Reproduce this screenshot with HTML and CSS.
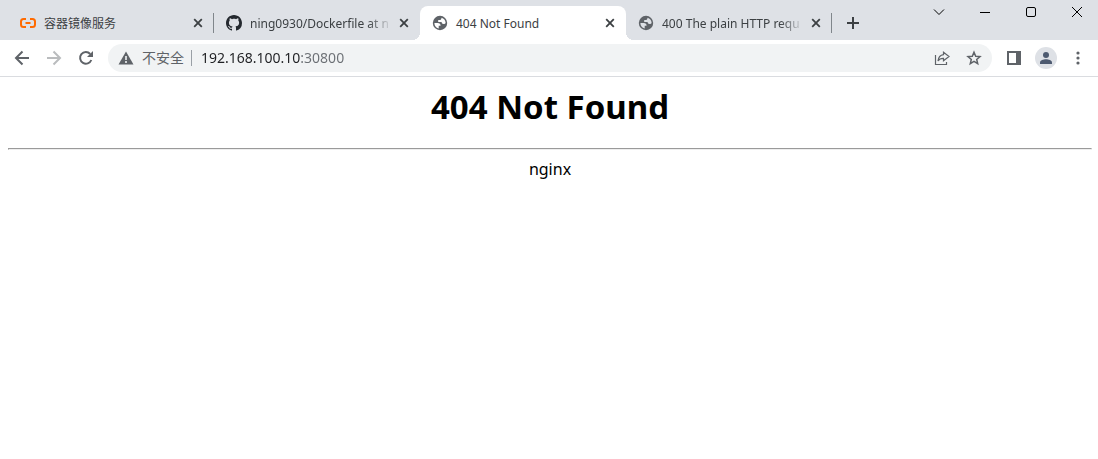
FILE: index.html
```html
<!DOCTYPE html>
<html lang="zh-CN">

<head>
  <meta charset="UTF-8" />
  <title>404 Not Found</title>
  <link rel="stylesheet" href="styles.css">
</head>

<body>
  <svg class="sprite" width="0" height="0" aria-hidden="true">
    <symbol id="close" viewBox="0 0 16 16">
      <path d="M4.2 4.2l7.6 7.6M11.8 4.2l-7.6 7.6" fill="none" stroke="currentColor" stroke-width="1.8" />
    </symbol>
    <symbol id="globe" viewBox="0 0 16 16">
      <path fill="#5f6368" fill-rule="evenodd" d="M8 .8a7.200 7.200 0 1 0 0 14.400A7.200 7.200 0 0 0 8 .8zM2.400 8h3.400c1.800 0 2.800.9 2.800 2.700H6.700v2.700A5.600 5.600 0 0 1 2.400 8zM9.500 2.700c2.300.6 4 2.700 4.100 5.100-.3 1-1.100 1.300-2 1.300-1.400 0-1.900-.7-2-2H6.200V5h1.300c1.200 0 2-.8 2-2.300z" />
    </symbol>
  </svg>

  <!-- 标签栏 -->
  <header class="tabbar">
    <div class="tab line">
      <button class="tab-title" type="button">
        <svg class="favicon" viewBox="0 0 16 16" fill="none" stroke="#ff6a00" stroke-width="2">
          <path d="M6 4H3.500Q1 4 1 6.500V9.500Q1 12 3.500 12H6M10 4H12.500Q15 4 15 6.500V9.500Q15 12 12.500 12H10M5.500 8H10.500" />
        </svg>
        <span>容器镜像服务</span>
      </button>
      <button class="tab-close" type="button" aria-label="关闭"><svg><use href="#close" /></svg></button>
    </div>
    <div class="tab">
      <button class="tab-title fade" type="button">
        <svg class="favicon" viewBox="0 0 16 16" fill="#24292f">
          <path d="M8 0C3.580 0 0 3.580 0 8c0 3.540 2.290 6.530 5.470 7.590.4.070.550-.170.550-.380 0-.190-.010-.820-.010-1.490-2.010.370-2.530-.490-2.690-.940-.090-.230-.480-.940-.820-1.130-.280-.150-.680-.520-.010-.530.630-.010 1.080.580 1.230.820.720 1.210 1.870.870 2.330.660.070-.520.280-.870.510-1.070-1.780-.2-3.640-.890-3.640-3.950 0-.870.310-1.590.820-2.150-.080-.2-.360-1.020.080-2.120 0 0 .670-.210 2.200.820.640-.180 1.320-.270 2-.270s1.360.090 2 .270c1.530-1.040 2.200-.820 2.200-.820.440 1.100.160 1.920.080 2.120.510.560.820 1.270.820 2.150 0 3.070-1.870 3.750-3.650 3.950.290.250.540.730.540 1.480 0 1.070-.010 1.930-.010 2.200 0 .210.150.460.550.380A8.010 8.010 0 0 0 16 8c0-4.420-3.580-8-8-8z" />
        </svg>
        <span>ning0930/Dockerfile at n</span>
      </button>
      <button class="tab-close" type="button" aria-label="关闭"><svg><use href="#close" /></svg></button>
    </div>
    <div class="tab active">
      <button class="tab-title" type="button">
        <svg class="favicon"><use href="#globe" /></svg>
        <span>404 Not Found</span>
      </button>
      <button class="tab-close" type="button" aria-label="关闭"><svg><use href="#close" /></svg></button>
    </div>
    <div class="tab line">
      <button class="tab-title fade" type="button">
        <svg class="favicon"><use href="#globe" /></svg>
        <span>400 The plain HTTP requ</span>
      </button>
      <button class="tab-close" type="button" aria-label="关闭"><svg><use href="#close" /></svg></button>
    </div>
    <button class="tab-new" type="button" aria-label="新标签页">
      <svg width="12" height="12" viewBox="0 0 12 12" stroke="#3c4043" stroke-width="2"><path d="M6 0v12M0 6h12" /></svg>
    </button>

    <!-- 窗口按钮 -->
    <div class="window">
      <button type="button" aria-label="搜索标签页">
        <svg width="12" height="12" viewBox="0 0 12 12"><path d="M1 3.500l5 5 5-5" /></svg>
      </button>
      <button type="button" aria-label="最小化">
        <svg width="12" height="12" viewBox="0 0 12 12"><path d="M1 6.500h10" /></svg>
      </button>
      <button type="button" aria-label="最大化">
        <svg width="12" height="12" viewBox="0 0 12 12"><rect x="1.500" y="1.500" width="9" height="9" rx="1.500" /></svg>
      </button>
      <button type="button" aria-label="关闭窗口">
        <svg width="12" height="12" viewBox="0 0 12 12"><path d="M1 1l10 10M11 1L1 11" /></svg>
      </button>
    </div>
  </header>

  <!-- 工具栏 -->
  <nav class="toolbar">
    <button class="tool" type="button" aria-label="后退">
      <svg width="16" height="16" viewBox="0 0 16 16" fill="none" stroke="currentColor" stroke-width="2"><path d="M15 8H2.500M8.500 1.500L2 8l6.500 6.500" /></svg>
    </button>
    <button class="tool" type="button" aria-label="前进" disabled>
      <svg width="16" height="16" viewBox="0 0 16 16" fill="none" stroke="currentColor" stroke-width="2"><path d="M1 8h12.500M7.500 1.500L14 8l-6.500 6.500" /></svg>
    </button>
    <button class="tool" type="button" aria-label="重新加载">
      <svg width="16" height="16" viewBox="0 0 16 16">
        <path d="M13.300 10A5.800 5.800 0 1 1 12.200 4" fill="none" stroke="currentColor" stroke-width="2" />
        <path d="M15 1v6H9z" fill="currentColor" />
      </svg>
    </button>

    <div class="address">
      <svg width="16" height="16" viewBox="0 0 16 16">
        <path d="M8 1.500L15.500 14.500H.5z" fill="#5f6368" />
        <path d="M8 6v4M8 11v2" stroke="#f1f3f4" stroke-width="1.600" />
      </svg>
      <label for="url">不安全</label>
      <input type="text" id="url" value="192.168.100.10:30800" />
      <button class="tool" type="button" aria-label="分享">
        <svg width="16" height="16" viewBox="0 0 16 16" fill="none" stroke="currentColor" stroke-width="1.200">
          <path d="M1.500 5v9.500h11V12M9.500 2.200L15 6.500l-5.500 4.300V8.400C7 8.300 5.200 9.200 4 11c.4-3.500 2.300-5.800 5.500-6.300z" />
        </svg>
      </button>
      <button class="tool" type="button" aria-label="收藏">
        <svg width="16" height="16" viewBox="0 0 16 16" fill="none" stroke="currentColor" stroke-width="1.500">
          <path d="M8 2.200l1.700 4 4.300.4-3.300 2.800 1 4.200L8 11.400l-3.700 2.200 1-4.200L2 6.600l4.300-.4z" />
        </svg>
      </button>
    </div>

    <button class="tool" type="button" aria-label="侧边栏">
      <svg width="14" height="14" viewBox="0 0 14 14"><path d="M0 0h14v14H0zM2 2v10h7V2z" fill="currentColor" fill-rule="evenodd" /></svg>
    </button>
    <button class="tool" type="button" aria-label="用户">
      <svg width="22" height="22" viewBox="0 0 22 22">
        <circle cx="11" cy="11" r="11" fill="#dee1e6" />
        <circle cx="11" cy="8" r="3" fill="#4d5a70" />
        <path d="M5 17v-1.500c0-2.200 3.500-3.300 6-3.300s6 1.100 6 3.300V17z" fill="#4d5a70" />
      </svg>
    </button>
    <button class="tool" type="button" aria-label="菜单">
      <svg width="4" height="14" viewBox="0 0 4 14" fill="currentColor"><circle cx="2" cy="2" r="1.600" /><circle cx="2" cy="7" r="1.600" /><circle cx="2" cy="12" r="1.600" /></svg>
    </button>
  </nav>

  <!-- 网页内容 -->
  <main>
    <h1>404 Not Found</h1>
    <hr>
    <p>nginx</p>
  </main>
</body>

</html>
```
FILE: styles.css
```css
body {
  margin: 0;
  background-color: #fff;
  font-family: "Noto Sans", "Noto Sans CJK SC", sans-serif;
}

.sprite {
  position: absolute;
}

button {
  display: flex;
  align-items: center;
  justify-content: center;
  flex: none;
  padding: 0;
  border: none;
  background: none;
  color: #5f6368;
  font-family: inherit;
}

svg {
  display: block;
  flex: none;
}

/* 标签栏 */
.tabbar {
  display: flex;
  height: 40px;
  padding: 0 9px 0 8px;
  box-sizing: border-box;
  background-color: #dee1e6;
}

.tab {
  position: relative;
  display: flex;
  align-items: center;
  flex: 0 1 206px;
  min-width: 0;
  height: 34px;
  margin-top: 6px;
  padding: 0 8px 0 12px;
  box-sizing: border-box;
}

.tab-title {
  flex: 1;
  justify-content: flex-start;
  gap: 8px;
  min-width: 0;
  overflow: hidden;
  color: #3c4043;
  font-size: 12px;
  line-height: 20px;
  white-space: nowrap;
}

.tab-title span {
  padding-top: 2px;
}

.fade {
  -webkit-mask-image: linear-gradient(to left, transparent 4px, #000 28px);
  mask-image: linear-gradient(to left, transparent 4px, #000 28px);
}

.favicon,
.tab-close svg {
  width: 16px;
  height: 16px;
}

.tab-close {
  color: #3c4043;
}

.line::after {
  content: "";
  position: absolute;
  top: 7px;
  right: 0;
  width: 1px;
  height: 20px;
  background-color: #80868b;
}

.active {
  border-radius: 8px 8px 0 0;
  background-color: #fff;
}

.active::before,
.active::after {
  content: "";
  position: absolute;
  bottom: 0;
  width: 8px;
  height: 8px;
}

.active::before {
  left: -8px;
  background: radial-gradient(circle at 0 0, transparent 8px, #fff 8px);
}

.active::after {
  right: -8px;
  background: radial-gradient(circle at 100% 0, transparent 8px, #fff 8px);
}

.tab-new {
  width: 28px;
  height: 28px;
  margin: 9px 0 0 7px;
}

.window {
  display: flex;
  gap: 22px;
  margin-left: auto;
}

.window button {
  width: 24px;
  height: 24px;
}

.window svg {
  fill: none;
  stroke: #000;
}

/* 工具栏 */
.toolbar {
  display: flex;
  align-items: center;
  gap: 4px;
  height: 36px;
  padding: 0 6px 0 8px;
  border-bottom: 1px solid #dadce0;
}

.tool {
  width: 28px;
  height: 28px;
}

.tool:disabled {
  color: #babcbe;
}

.address {
  display: flex;
  align-items: center;
  flex: 1;
  gap: 4px;
  height: 28px;
  margin: 0 4px;
  padding: 0 4px 0 10px;
  border-radius: 14px;
  background-color: #f1f3f4;
}

.address label {
  margin-left: 4px;
  padding-right: 7px;
  border-right: 1px solid #9aa0a6;
  color: #5f6368;
  font-size: 14px;
  line-height: 16px;
}

/* 主机名深色,端口浅色 */
.address input {
  flex: 1;
  min-width: 0;
  margin-left: 5px;
  padding: 0;
  border: none;
  outline: none;
  background: linear-gradient(to right, #202124 100px, #6b6f74 100px);
  -webkit-background-clip: text;
  background-clip: text;
  color: transparent;
  font-family: inherit;
  font-size: 14px;
  line-height: 20px;
}

/* 网页内容 */
main {
  padding: 8px 6px 8px 8px;
  color: #000;
  text-align: center;
}

h1 {
  margin: 0 0 20px;
  font-size: 33px;
  line-height: 43px;
}

hr {
  margin: 0 0 8px;
}

p {
  margin: 0;
  font-size: 16px;
  line-height: 22px;
}
```
